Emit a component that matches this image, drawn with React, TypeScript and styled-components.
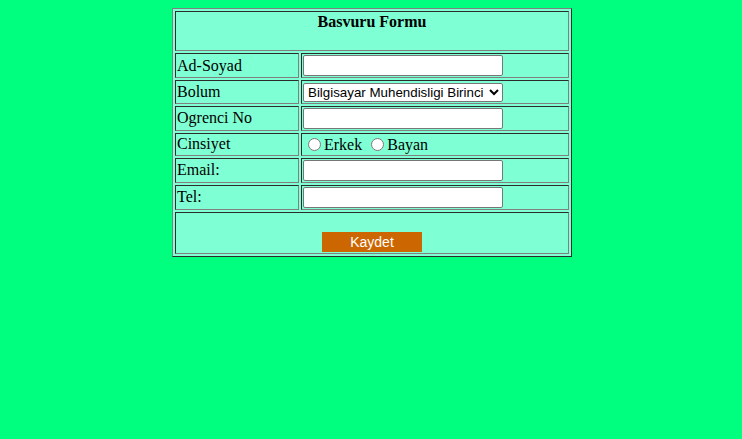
import styled, { createGlobalStyle } from 'styled-components'

const Global = createGlobalStyle`
  body {
    margin: 8px;
    padding-left: 2px;
    background: #00FF7F;
    font-family: "Liberation Serif", "Times New Roman", serif;
    font-size: 16px;
  }
`

const FormTable = styled.table`
  width: 400px;
  margin: 0 auto;
  border: 1px outset grey;
  border-spacing: 2px;
  background: #7FFFD4;
  font-family: "Liberation Serif", "Times New Roman", serif;
  font-size: 16px;
`

const Cell = styled.td<{ $center?: boolean }>`
  border: 1px inset grey;
  padding: 1px;
  text-align: ${(p) => (p.$center ? 'center' : 'left')};
  vertical-align: middle;
`

const LabelCell = styled(Cell)`
  width: 120px;
`

const TextInput = styled.input`
  width: 200px;
  height: 21px;
  box-sizing: border-box;
  border: 1px solid #767676;
  border-radius: 2px;
  padding: 1px 2px;
  background: #fff;
  font-family: "Liberation Sans", Arial, sans-serif;
  font-size: 13.333px;
  vertical-align: middle;
`

const Select = styled.select`
  width: 200px;
  height: 19px;
  box-sizing: border-box;
  border: 1px solid #767676;
  border-radius: 2px;
  background: #fff;
  font-family: "Liberation Sans", Arial, sans-serif;
  font-size: 13.333px;
  vertical-align: middle;
`

const Radio = styled.input`
  margin: 3px 3px 0 5px;
  vertical-align: -1px;
`

const SaveButton = styled.button`
  width: 100px;
  height: 20px;
  border: none;
  background: #CC6600;
  color: #fff;
  font-family: "Liberation Sans", Arial, sans-serif;
  font-size: 14px;
  padding: 0;
`

export default function App() {
  return (
    <>
      <Global />
      <FormTable>
        <tbody>
          <tr>
            <Cell colSpan={2} $center>
              <b>Basvuru Formu</b>
              <br />
              &nbsp;
            </Cell>
          </tr>
          <tr>
            <LabelCell>Ad-Soyad</LabelCell>
            <Cell>
              <TextInput type="text" />
            </Cell>
          </tr>
          <tr>
            <LabelCell>Bolum</LabelCell>
            <Cell>
              <Select defaultValue="bm1">
                <option value="bm1">Bilgisayar Muhendisligi Birinci Ogretim</option>
                <option value="bm2">Bilgisayar Muhendisligi Ikinci Ogretim</option>
              </Select>
            </Cell>
          </tr>
          <tr>
            <LabelCell>Ogrenci No</LabelCell>
            <Cell>
              <TextInput type="text" />
            </Cell>
          </tr>
          <tr>
            <LabelCell>Cinsiyet</LabelCell>
            <Cell>
              <Radio type="radio" name="cinsiyet" />
              Erkek{' '}
              <Radio type="radio" name="cinsiyet" />
              Bayan
            </Cell>
          </tr>
          <tr>
            <LabelCell>Email:</LabelCell>
            <Cell>
              <TextInput type="text" />
            </Cell>
          </tr>
          <tr>
            <LabelCell>Tel:</LabelCell>
            <Cell>
              <TextInput type="text" />
            </Cell>
          </tr>
          <tr>
            <Cell colSpan={2} $center>
              <br />
              <SaveButton type="button">Kaydet</SaveButton>
            </Cell>
          </tr>
        </tbody>
      </FormTable>
    </>
  )
}
